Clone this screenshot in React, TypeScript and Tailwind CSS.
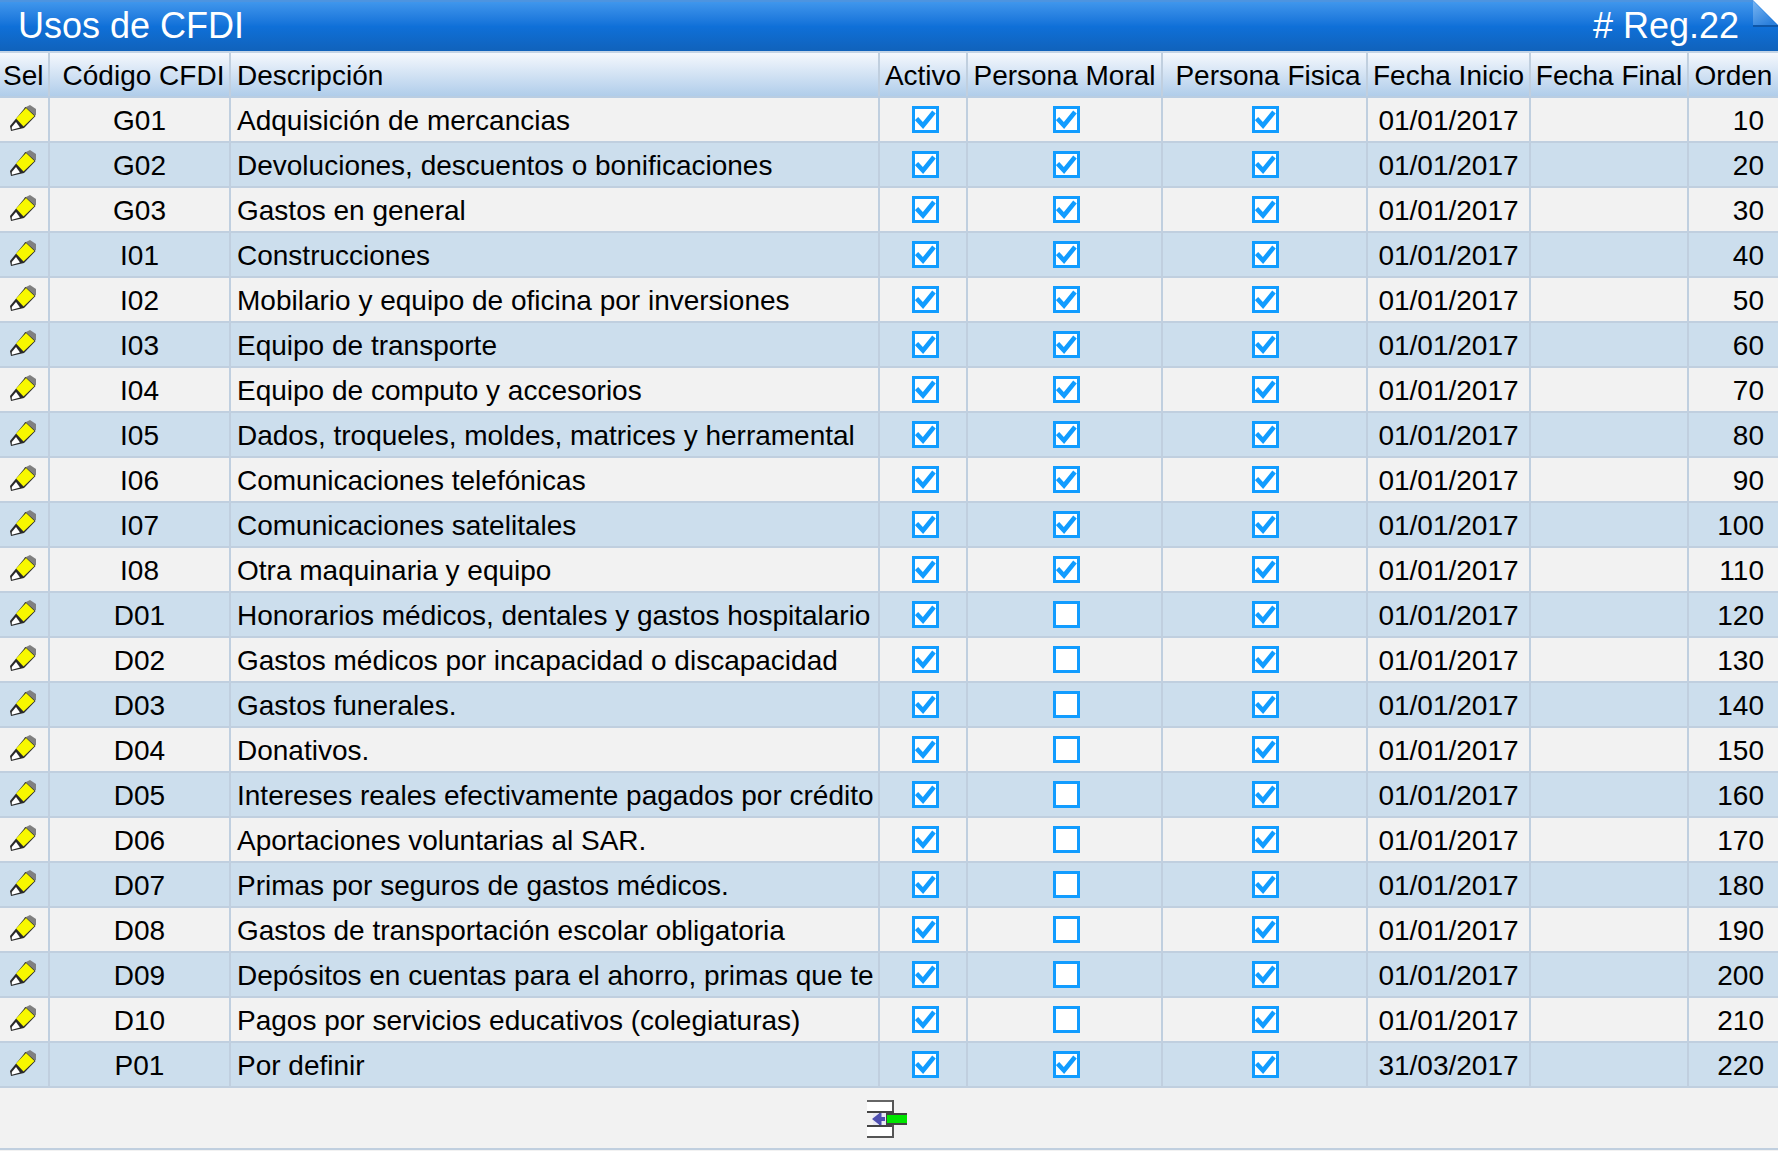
const rows: [string, string, boolean, string, number][] = [
  ["G01", "Adquisición de mercancias", true, "01/01/2017", 10],
  ["G02", "Devoluciones, descuentos o bonificaciones", true, "01/01/2017", 20],
  ["G03", "Gastos en general", true, "01/01/2017", 30],
  ["I01", "Construcciones", true, "01/01/2017", 40],
  ["I02", "Mobilario y equipo de oficina por inversiones", true, "01/01/2017", 50],
  ["I03", "Equipo de transporte", true, "01/01/2017", 60],
  ["I04", "Equipo de computo y accesorios", true, "01/01/2017", 70],
  ["I05", "Dados, troqueles, moldes, matrices y herramental", true, "01/01/2017", 80],
  ["I06", "Comunicaciones telefónicas", true, "01/01/2017", 90],
  ["I07", "Comunicaciones satelitales", true, "01/01/2017", 100],
  ["I08", "Otra maquinaria y equipo", true, "01/01/2017", 110],
  ["D01", "Honorarios médicos, dentales y gastos hospitalario", false, "01/01/2017", 120],
  ["D02", "Gastos médicos por incapacidad o discapacidad", false, "01/01/2017", 130],
  ["D03", "Gastos funerales.", false, "01/01/2017", 140],
  ["D04", "Donativos.", false, "01/01/2017", 150],
  ["D05", "Intereses reales efectivamente pagados por crédito", false, "01/01/2017", 160],
  ["D06", "Aportaciones voluntarias al SAR.", false, "01/01/2017", 170],
  ["D07", "Primas por seguros de gastos médicos.", false, "01/01/2017", 180],
  ["D08", "Gastos de transportación escolar obligatoria", false, "01/01/2017", 190],
  ["D09", "Depósitos en cuentas para el ahorro, primas que te", false, "01/01/2017", 200],
  ["D10", "Pagos por servicios educativos (colegiaturas)", false, "01/01/2017", 210],
  ["P01", "Por definir", true, "31/03/2017", 220],
];

const gridCols = "grid grid-cols-[50px_181px_649px_88px_195px_205px_163px_158px_1fr] grid-rows-[43px]";
const cell = "border-r-2 border-[#c0cfdf] flex items-center overflow-hidden whitespace-nowrap";

const Check = ({ on }: { on: boolean }) => (
  <span className="w-[27px] h-[27px] border-[3px] border-[#119cff] bg-white flex items-center justify-center">
    {on && (
      <svg width="21" height="21" viewBox="0 0 21 21">
        <path d="M1.5 9.5 L8 16.5 L19 3" fill="none" stroke="#119cff" strokeWidth="4.6" />
      </svg>
    )}
  </span>
);

const Pencil = () => (
  <svg className="blur-[0.4px]" width="26" height="26" viewBox="0 0 26 26">
    <path d="M14 3 L20 0 L26 4 L26 10 L23 11 Z" fill="#808080" />
    <path d="M0 21 L15.5 2 L25.5 11 L14 23 L1 26 Z" fill="#2a2a2a" />
    <path d="M6 13.5 L16 3 L24.5 11 L13.5 21.5 Z" fill="#f8f800" />
    <path d="M1.8 22 L6 17 L10 22.4 L1.8 24.8 Z" fill="#fff" />
  </svg>
);

const ExitIcon = () => (
  <svg className="blur-[0.3px]" width="40" height="38" viewBox="0 0 40 38">
    <rect x="0" y="0" width="27" height="2" fill="#666" />
    <rect x="25" y="0" width="2" height="13" fill="#555" />
    <rect x="0" y="2" width="25" height="9" fill="#fff" />
    <rect x="0" y="11" width="27" height="2" fill="#444" />
    <rect x="0" y="13" width="19" height="12" fill="#f2f2f2" />
    <rect x="18" y="13" width="22" height="12" fill="#444" />
    <rect x="6" y="13" width="13" height="12" fill="#e8e8f4" />
    <path d="M5 19 L12 13.5 V17 H18 V21 H12 V24.5 Z" fill="#4f4fb0" />
    <rect x="12" y="13" width="2.5" height="12" fill="#4f4fb0" />
    <rect x="20" y="15" width="20" height="8" fill="#00e600" />
    <rect x="0" y="25" width="27" height="2" fill="#444" />
    <rect x="25" y="25" width="2" height="13" fill="#555" />
    <rect x="0" y="27" width="25" height="9" fill="#fff" />
    <rect x="0" y="36" width="27" height="2" fill="#555" />
  </svg>
);

export default function App() {
  return (
    <div className="w-[1778px] h-[1151px] bg-[#f2f2f2] font-['Liberation_Sans',Arial,sans-serif] text-black overflow-hidden">
      <div className="relative h-[51px] bg-gradient-to-b from-[#3f96ec] via-[#0f70d8] to-[#1062bb] flex items-center justify-between pl-[18px] pr-[39px] pb-[2px] text-white text-[36px] border-t-2 border-[#4d94e0]">
        <span>Usos de CFDI</span>
        <span># Reg.22</span>
        <svg className="absolute top-[-2px] right-0" width="28" height="27" viewBox="0 0 28 27">
          <defs>
            <linearGradient id="fold" x1="0" y1="0" x2="0.6" y2="1">
              <stop offset="0" stopColor="#7ab6f2" />
              <stop offset="1" stopColor="#2c80dc" />
            </linearGradient>
          </defs>
          <path d="M3 0 H28 V25 Z" fill="#fff" />
          <path d="M3 25 H28 V27 H3 Z" fill="#0d56a8" />
          <path d="M3 1 L27 25 H3 Z" fill="url(#fold)" />
        </svg>
      </div>
      <div className="h-[2px] bg-[#c4d4e6]" />
      <div className={`${gridCols} h-[45px] text-[28px] border-b-2 border-[#b9cde2] bg-gradient-to-b from-[#f5f8fd] to-[#b0cdea]`}>
        <div className={`${cell} pl-[3px] pt-[2px]`}>Sel</div>
        <div className={`${cell} justify-center pl-[8px] pt-[2px]`}>Código CFDI</div>
        <div className={`${cell} pl-[6px] pt-[2px]`}>Descripción</div>
        <div className={`${cell} justify-center pt-[2px]`}>Activo</div>
        <div className={`${cell} justify-center pt-[2px]`}>Persona Moral</div>
        <div className={`${cell} justify-center pl-[7px] pt-[2px]`}>Persona Fisica</div>
        <div className={`${cell} justify-center pt-[2px]`}>Fecha Inicio</div>
        <div className={`${cell} justify-center pt-[2px]`}>Fecha Final</div>
        <div className="flex items-center justify-center pt-[2px]">Orden</div>
      </div>
      {rows.map(([code, desc, moral, start, order], i) => (
        <div
          key={code}
          className={`${gridCols} h-[45px] text-[28px] border-b-2 border-[#c0cfdf] ${i % 2 === 0 ? "bg-[#f2f2f2]" : "bg-[#ccdeed]"}`}
        >
          <div className={`${cell} justify-center pr-[3px] pb-[3px]`}>
            <Pencil />
          </div>
          <div className={`${cell} justify-center pt-[2px]`}>{code}</div>
          <div className={`${cell} pl-[6px] pt-[2px]`}>{desc}</div>
          <div className={`${cell} justify-center pl-[4px]`}>
            <Check on />
          </div>
          <div className={`${cell} justify-center pl-[4px]`}>
            <Check on={moral} />
          </div>
          <div className={`${cell} justify-center pl-[2px]`}>
            <Check on />
          </div>
          <div className={`${cell} justify-center pt-[2px]`}>{start}</div>
          <div className={cell} />
          <div className="flex items-center justify-end pr-[14px] pt-[2px]">{order}</div>
        </div>
      ))}
      <div className="h-[62px] border-b-2 border-[#c0cfdf] flex items-center justify-center pr-[4px] pt-[2px]">
        <ExitIcon />
      </div>
    </div>
  );
}
